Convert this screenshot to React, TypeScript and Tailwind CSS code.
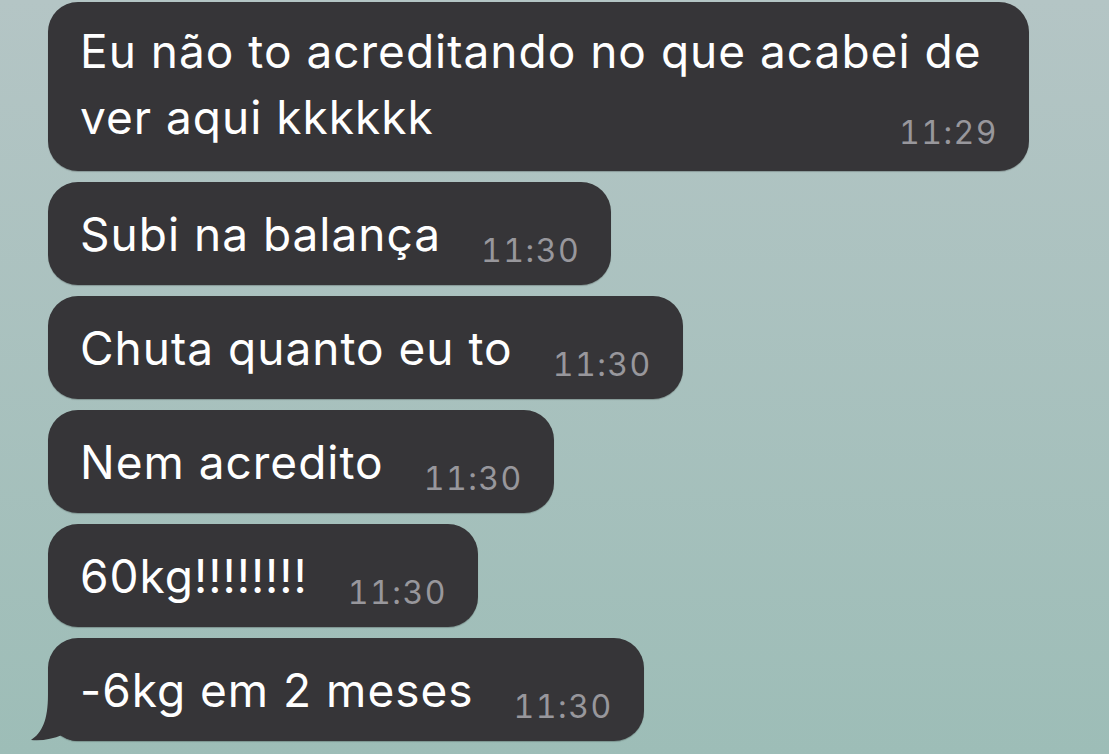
import React from "react";

const font = { fontFamily: "Inter, 'Noto Sans', sans-serif" };

function Bubble({ text, time, tail }: { text: string; time: string; tail?: boolean }) {
  return (
    <div className="relative inline-flex items-end rounded-[30px] bg-[#363538] pl-[32px] pr-[31px] pt-[26px] pb-[15px] shadow-[0_1px_1px_rgba(0,0,0,0.22)]">
      <span className="text-[46px] leading-[52px] text-white mb-[10px] whitespace-nowrap tracking-[1px]">{text}</span>
      <span className="ml-[40px] text-[32px] leading-[38px] text-[#98979c] whitespace-nowrap tabular-nums tracking-[1.5px]">{time}</span>
      {tail && (
        <svg className="absolute left-[-18px] top-[57px]" width="50" height="47" viewBox="0 0 50 47">
          <path d="M18,0 C18,25 12,38 1,45 C12,46 23,44 32,40 C36,44 42,46 50,46 L50,0 Z" fill="#363538" />
        </svg>
      )}
    </div>
  );
}

export default function App() {
  return (
    <div
      style={font}
      className="w-[1109px] h-[754px] overflow-hidden bg-gradient-to-b from-[#b4c5c5] to-[#9dbdb7] pl-[48px] pt-[2px] flex flex-col items-start gap-[11px]"
    >
      <div className="w-[981px] rounded-[30px] bg-[#363538] pl-[32px] pr-[31px] pt-[16px] pb-[19px] shadow-[0_1px_1px_rgba(0,0,0,0.22)]">
        <div className="text-[46px] leading-[66px] text-white tracking-[1px]">
          Eu não to acreditando no que acabei de
          <br />
          ver aqui kkkkkk
        </div>
        <div className="mt-[-36px] text-right text-[32px] leading-[38px] text-[#98979c] tabular-nums tracking-[1.5px]">11:29</div>
      </div>
      <Bubble text="Subi na balança" time="11:30" />
      <Bubble text="Chuta quanto eu to" time="11:30" />
      <Bubble text="Nem acredito" time="11:30" />
      <Bubble text="60kg!!!!!!!!" time="11:30" />
      <Bubble text="-6kg em 2 meses" time="11:30" tail />
    </div>
  );
}
